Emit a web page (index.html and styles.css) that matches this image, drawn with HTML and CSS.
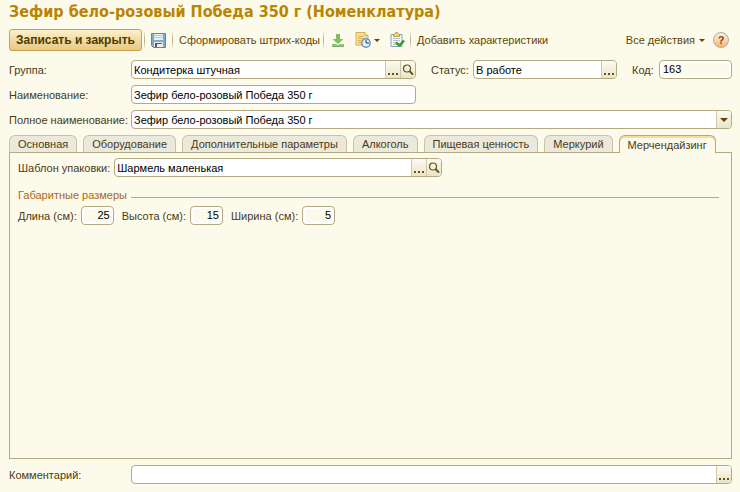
FILE: index.html
```
<!DOCTYPE html>
<html lang="ru">
<head>
    <meta charset="UTF-8">
    <meta name="viewport" content="width=device-width, initial-scale=1.0">
    <title>Зефир бело-розовый Победа 350 г (Номенклатура)</title>
    <link rel="stylesheet" href="styles.css">
</head>
<body>
    <svg class="sprite" aria-hidden="true">
        <symbol id="search" viewBox="0 0 12 12">
            <circle cx="5" cy="4.5" r="3.5" fill="none" stroke="#6b5210" stroke-width="1.2"/>
            <path d="M7.4 7l3.6 3.6" stroke="#6b5210" stroke-width="2"/>
        </symbol>
        <symbol id="dots" viewBox="0 0 12 12">
            <path d="M1 9h2v2H1zM5 9h2v2H5zM9 9h2v2H9z" fill="#6b5210"/>
        </symbol>
        <symbol id="arrow" viewBox="0 0 8 4">
            <path d="M0 0h8L4 4z" fill="#5f4700"/>
        </symbol>
    </svg>

    <h1>Зефир бело-розовый Победа 350 г (Номенклатура)</h1>

    <div class="toolbar">
        <button class="primary">Записать и закрыть</button>
        <span class="separator"></span>
        <button class="tool save" aria-label="Записать">
            <svg width="15" height="15" viewBox="0 0 15 15">
                <path d="M.5 .5h14v14h-12l-2-2z" fill="#88a9c2" stroke="#65859f"/>
                <path d="M3 1h9v6H3z" fill="#e4f0f7"/>
                <path d="M3 2.5h9M3 4.5h9" stroke="#b4cfdf"/>
                <path d="M3 9h9v5H3z" fill="#edf0f2"/>
                <path d="M4 10h7v1H6v3H4z" fill="#4b5b69"/>
            </svg>
        </button>
        <span class="separator"></span>
        <button class="tool barcodes">Сформировать штрих-коды</button>
        <span class="separator"></span>
        <button class="tool load" aria-label="Загрузить">
            <svg width="14" height="15" viewBox="0 0 14 15">
                <path d="M5 1h4v5h3.500L7 11 1.500 6H5z" fill="#83bd62"/>
                <path d="M1 11h4l2 1 2-1h4v3H1z" fill="#93c07c"/>
                <path d="M1 13.500h12" stroke="#7fae68"/>
            </svg>
        </button>
        <button class="tool report" aria-label="Отчеты">
            <svg width="16" height="16" viewBox="0 0 16 16">
                <path d="M1 .5h9l3 3V13H1V9l1-1-1-1z" fill="#f9e09a" stroke="#d8ae55"/>
                <path d="M10 .5v3h3" fill="#fff3c8" stroke="#d8aa45"/>
                <path d="M3 4.500h6M3 6.500h5M3 8.500h3M3 10.500h3" stroke="#d9b25a"/>
                <circle cx="11" cy="11" r="4.200" fill="#e6f2fb" stroke="#6a8fb5" stroke-width="1.400"/>
                <path d="M11 8v3h3" fill="none" stroke="#1e4274"/>
            </svg>
            <svg class="caret" width="6" height="3"><use href="#arrow"/></svg>
        </button>
        <button class="tool check" aria-label="Проверить">
            <svg width="15" height="16" viewBox="0 0 15 16">
                <path d="M1 2.500h11v12H1z" fill="#f4f9fc" stroke="#8ba0ae"/>
                <path d="M3.500 2.500h1l1-2h2l1 2h1v2h-6z" fill="#f5d77e" stroke="#c09b4a"/>
                <path d="M3 6.500h7M3 8.500h7M3 10.500h3M3 12.500h3" stroke="#adc0cc"/>
                <path d="M6 10.500l3.500 3L14 8.500" fill="none" stroke="#379c2d" stroke-width="2.600"/>
            </svg>
        </button>
        <span class="separator"></span>
        <button class="tool features">Добавить характеристики</button>
        <button class="tool all">Все действия <svg width="6" height="3"><use href="#arrow"/></svg></button>
        <button class="help" aria-label="Справка">?</button>
    </div>

    <div class="fields">
        <label for="group">Группа:</label>
        <div class="field">
            <input id="group" value="Кондитерка штучная">
            <button aria-label="Выбрать"><svg><use href="#dots"/></svg></button>
            <button aria-label="Открыть"><svg><use href="#search"/></svg></button>
        </div>
        <label for="status" class="inner">Статус:</label>
        <div class="field">
            <input id="status" value="В работе">
            <button aria-label="Выбрать"><svg><use href="#dots"/></svg></button>
        </div>
        <label for="code" class="inner">Код:</label>
        <div class="field"><input id="code" class="muted" value="163"></div>

        <label for="name" class="first">Наименование:</label>
        <div class="field"><input id="name" value="Зефир бело-розовый Победа 350 г"></div>

        <label for="fullname" class="first">Полное наименование:</label>
        <div class="field wide">
            <input id="fullname" value="Зефир бело-розовый Победа 350 г">
            <button aria-label="Раскрыть"><svg class="down"><use href="#arrow"/></svg></button>
        </div>
    </div>

    <div class="tabs" role="tablist">
        <button role="tab">Основная</button>
        <button role="tab">Оборудование</button>
        <button role="tab">Дополнительные параметры</button>
        <button role="tab">Алкоголь</button>
        <button role="tab">Пищевая ценность</button>
        <button role="tab">Меркурий</button>
        <button role="tab" class="active" aria-selected="true">Мерчендайзинг</button>
    </div>

    <div class="panel" role="tabpanel">
        <div class="template">
            <label for="template">Шаблон упаковки:</label>
            <div class="field">
                <input id="template" value="Шармель маленькая">
                <button aria-label="Выбрать"><svg><use href="#dots"/></svg></button>
                <button aria-label="Открыть"><svg><use href="#search"/></svg></button>
            </div>
        </div>

        <h2>Габаритные размеры</h2>
        <div class="sizes">
            <label for="length">Длина (см):</label>
            <div class="field"><input id="length" class="muted" value="25"></div>
            <label for="height">Высота (см):</label>
            <div class="field"><input id="height" class="muted" value="15"></div>
            <label for="width">Ширина (см):</label>
            <div class="field"><input id="width" class="muted" value="5"></div>
        </div>
    </div>

    <div class="comment">
        <label for="comment">Комментарий:</label>
        <div class="field">
            <input id="comment">
            <button aria-label="Выбрать"><svg><use href="#dots"/></svg></button>
        </div>
    </div>
</body>
</html>
```
FILE: styles.css
```
* {
    box-sizing: border-box;
}
body {
    display: flex;
    flex-direction: column;
    min-height: 100vh;
    margin: 0;
    padding: 0 8px 8px 9px;
    background: #fcfaeb;
    color: #4a3b14;
    font: 11px/19px "Liberation Sans", Arial, sans-serif;
}
button, input {
    font: inherit;
    color: inherit;
}
button {
    padding: 0;
    border: none;
    background: none;
    white-space: nowrap;
    cursor: pointer;
}
label {
    height: 19px;
    line-height: 20px;
    white-space: nowrap;
}
.sprite {
    position: absolute;
    width: 0;
    height: 0;
}
h1 {
    margin: 0;
    color: #b98500;
    font: bold 16px/24px "DejaVu Sans Condensed", Tahoma, sans-serif;
}

/* toolbar */
.toolbar {
    display: flex;
    align-items: center;
    height: 22px;
    margin: 5px 0 9px;
}
.primary {
    height: 22px;
    padding: 0 6px;
    border: 1px solid #c9a14a;
    border-radius: 3px;
    background: linear-gradient(#fdf1cd, #f0d99e 55%, #e6c987);
    color: #4f3b00;
    font-size: 12px;
    font-weight: bold;
    line-height: 20px;
}
.separator {
    width: 1px;
    height: 20px;
    background: linear-gradient(#fcfaeb, #b3a982, #fcfaeb);
}
.primary + .separator {
    margin-left: 2px;
}
.tool {
    display: flex;
    align-items: center;
    color: #5f4700;
}
.save {
    margin: 0 6px;
}
.barcodes {
    margin: 0 3px 0 6px;
}
.load {
    margin: 0 10px 0 7px;
}
.caret {
    margin-left: 3px;
}
.check {
    margin: 0 5px 0 10px;
}
.features {
    margin-left: 6px;
}
.all {
    gap: 4px;
    margin-left: auto;
}
.help {
    width: 16px;
    height: 16px;
    margin: 0 3px 0 8px;
    border: 1px solid #b5a79a;
    border-radius: 50%;
    background: linear-gradient(#fdeedd, #f9d3a4 60%, #fbb45c);
    color: #7a4c2c;
    font-weight: bold;
    line-height: 14px;
}

/* fields */
.fields {
    display: grid;
    grid-template-columns: 122px 285fr 57px 144fr 42px 73fr;
    row-gap: 6px;
}
.first {
    grid-column: 1;
}
.inner {
    padding-left: 15px;
}
.wide {
    grid-column: 2 / -1;
}
.field {
    display: flex;
    min-width: 0;
    height: 19px;
    border: 1px solid #b3a982;
    border-radius: 4px;
    background: #fff;
    overflow: hidden;
}
.field input {
    flex: 1;
    min-width: 0;
    padding: 1px 2px 0;
    border: none;
    outline: none;
    background: none;
    color: #000;
}
.field .muted {
    margin: 2px;
    padding: 0 1px;
    background: #fcfaeb;
}
.field button {
    display: flex;
    flex: none;
    align-items: center;
    justify-content: center;
    width: 15px;
    border-left: 1px solid #cfc7a5;
    background: linear-gradient(#fdfbf1, #e9e4c8);
}
.field svg {
    width: 12px;
    height: 12px;
}
.field .down {
    width: 8px;
    height: 4px;
}

/* tabs */
.tabs {
    display: flex;
    gap: 6px;
    margin-top: 6px;
}
.tabs button {
    height: 17px;
    padding: 0 8px;
    border: 1px solid #c9c2a3;
    border-bottom: none;
    border-radius: 6px 6px 0 0;
    background: #ebe9dc;
    line-height: 16px;
}
.tabs .active {
    height: 18px;
    margin-bottom: -1px;
    border-color: #b3a982;
    background: #fcfaeb;
    box-shadow: inset 0 2px #f9dc9c;
    z-index: 1;
}
.panel {
    flex: 1;
    padding: 5px 12px 5px 8px;
    border: 1px solid #b3a982;
}
.template {
    display: flex;
    gap: 4px;
}
.template .field {
    flex: 0 1 328px;
}
h2 {
    display: flex;
    align-items: center;
    gap: 4px;
    margin: 9px 0 0;
    color: #a8690f;
    font-size: 11px;
    font-weight: normal;
}
h2::after {
    content: "";
    flex: 1;
    height: 1px;
    margin-top: 4px;
    background: #b3a982;
}
.sizes {
    display: flex;
    gap: 4px;
    margin-top: 1px;
}
.sizes .field {
    width: 33px;
    margin-right: 4px;
}
.sizes input {
    text-align: right;
}
.comment {
    display: grid;
    grid-template-columns: 122px 1fr;
    margin-top: 6px;
}
```
